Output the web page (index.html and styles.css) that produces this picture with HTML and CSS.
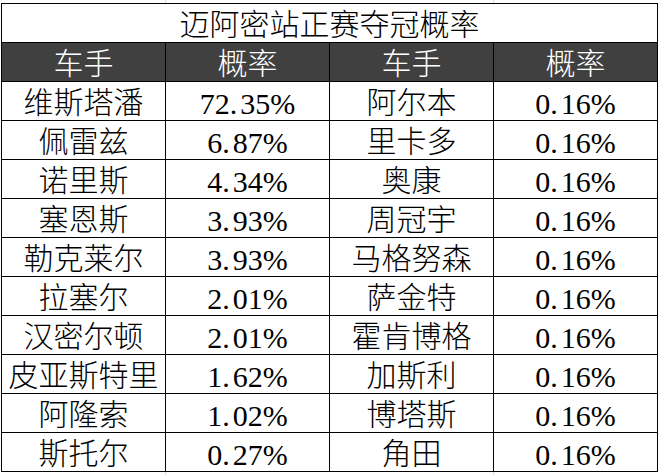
FILE: index.html
```html
<!DOCTYPE html>
<html lang="zh-CN">
<head>
<meta charset="utf-8">
<title>迈阿密站正赛夺冠概率</title>
<link rel="stylesheet" href="styles.css">
</head>
<body>
<div class="sheet">
  <div class="grid">
    <div class="cell title">迈阿密站正赛夺冠概率</div>
    <div class="cell head">车手</div>
    <div class="cell head">概率</div>
    <div class="cell head">车手</div>
    <div class="cell head">概率</div>

    <div class="cell name">维斯塔潘</div><div class="cell num">72<span class="dot">.</span>35%</div><div class="cell name">阿尔本</div><div class="cell num">0<span class="dot">.</span>16%</div>
    <div class="cell name">佩雷兹</div><div class="cell num">6<span class="dot">.</span>87%</div><div class="cell name">里卡多</div><div class="cell num">0<span class="dot">.</span>16%</div>
    <div class="cell name">诺里斯</div><div class="cell num">4<span class="dot">.</span>34%</div><div class="cell name">奥康</div><div class="cell num">0<span class="dot">.</span>16%</div>
    <div class="cell name">塞恩斯</div><div class="cell num">3<span class="dot">.</span>93%</div><div class="cell name">周冠宇</div><div class="cell num">0<span class="dot">.</span>16%</div>
    <div class="cell name">勒克莱尔</div><div class="cell num">3<span class="dot">.</span>93%</div><div class="cell name">马格努森</div><div class="cell num">0<span class="dot">.</span>16%</div>
    <div class="cell name">拉塞尔</div><div class="cell num">2<span class="dot">.</span>01%</div><div class="cell name">萨金特</div><div class="cell num">0<span class="dot">.</span>16%</div>
    <div class="cell name">汉密尔顿</div><div class="cell num">2<span class="dot">.</span>01%</div><div class="cell name">霍肯博格</div><div class="cell num">0<span class="dot">.</span>16%</div>
    <div class="cell name">皮亚斯特里</div><div class="cell num">1<span class="dot">.</span>62%</div><div class="cell name">加斯利</div><div class="cell num">0<span class="dot">.</span>16%</div>
    <div class="cell name">阿隆索</div><div class="cell num">1<span class="dot">.</span>02%</div><div class="cell name">博塔斯</div><div class="cell num">0<span class="dot">.</span>16%</div>
    <div class="cell name">斯托尔</div><div class="cell num">0<span class="dot">.</span>27%</div><div class="cell name">角田</div><div class="cell num">0<span class="dot">.</span>16%</div>
  </div>
</div>
</body>
</html>
```
FILE: styles.css
```css
html, body {
  margin: 0;
  padding: 0;
}
body {
  width: 660px;
  height: 475px;
  overflow: hidden;
  background:
    linear-gradient(#dadada, #dadada) 165px 0 / 1px 100% no-repeat,
    linear-gradient(#dadada, #dadada) 493px 0 / 1px 100% no-repeat,
    #ffffff;
}
.sheet {
  padding: 3px 0 0 1px;
}
.grid {
  display: grid;
  grid-template-columns: repeat(4, 163px);
  grid-auto-rows: 38px;
  gap: 1px;
  padding: 1px;
  width: max-content;
  background: #000;
}
.cell {
  display: flex;
  align-items: center;
  justify-content: center;
  background: #fff;
  color: #000;
  font-family: "Liberation Serif", "Noto Sans CJK SC", serif;
  font-weight: 300;
  font-size: 30px;
  line-height: 1;
  white-space: nowrap;
  padding-top: 4px;
  box-sizing: border-box;
  overflow: hidden;
}
.title {
  grid-column: 1 / -1;
}
.head {
  background: #404040;
  color: #fff;
}
.num {
  font-family: "Liberation Serif", "Times New Roman", "DejaVu Serif", serif;
  font-weight: 400;
  font-size: 30px;
  padding-top: 6px;
}
.dot {
  padding-right: 3px;
}
```
